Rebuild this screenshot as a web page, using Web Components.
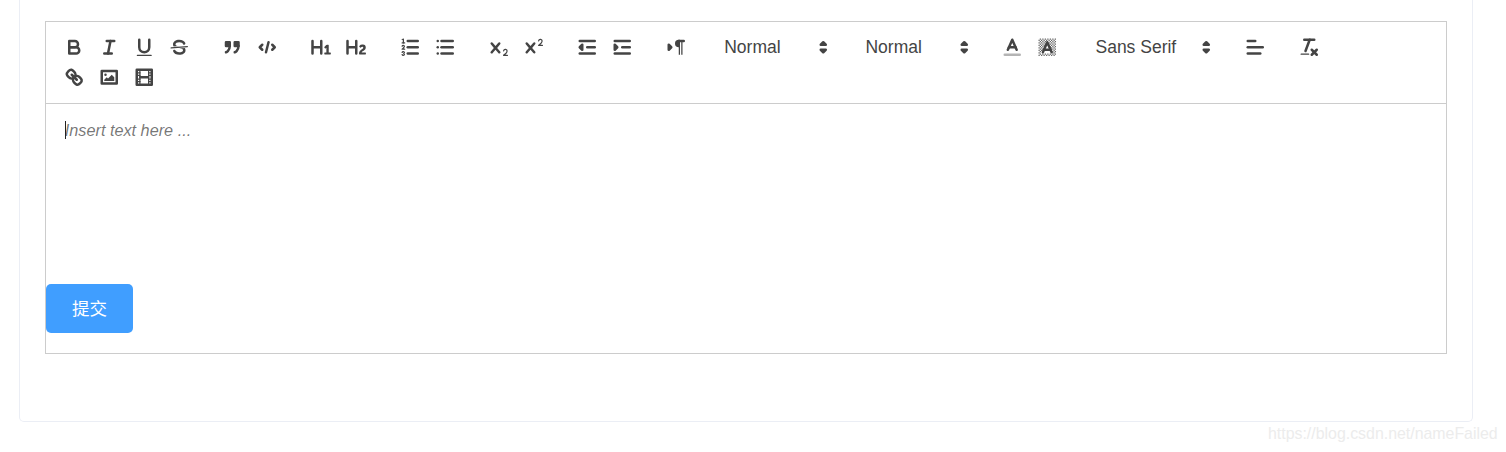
<!DOCTYPE html>
<html>
<head>
<meta charset="utf-8">
<title>editor</title>
<style>
  html, body { margin: 0; padding: 0; background: #fff; }
  body { font-family: "Liberation Sans", Arial, sans-serif; height: 452px; overflow: hidden; }
</style>
</head>
<body>
<editor-page>
  <form-card>
    <rich-editor placeholder="Insert text here ...">
      <editor-toolbar>
        <tool-group>
          <tool-button icon="bold"></tool-button>
          <tool-button icon="italic"></tool-button>
          <tool-button icon="underline"></tool-button>
          <tool-button icon="strike"></tool-button>
        </tool-group>
        <tool-group>
          <tool-button icon="blockquote"></tool-button>
          <tool-button icon="code"></tool-button>
        </tool-group>
        <tool-group>
          <tool-button icon="h1"></tool-button>
          <tool-button icon="h2"></tool-button>
        </tool-group>
        <tool-group>
          <tool-button icon="ordered"></tool-button>
          <tool-button icon="bullet"></tool-button>
        </tool-group>
        <tool-group>
          <tool-button icon="sub"></tool-button>
          <tool-button icon="sup"></tool-button>
        </tool-group>
        <tool-group>
          <tool-button icon="outdent"></tool-button>
          <tool-button icon="indent"></tool-button>
        </tool-group>
        <tool-group>
          <tool-button icon="direction"></tool-button>
        </tool-group>
        <tool-group>
          <tool-picker size="122.5">Normal</tool-picker>
        </tool-group>
        <tool-group>
          <tool-picker size="122.5">Normal</tool-picker>
        </tool-group>
        <tool-group>
          <tool-button icon="color"></tool-button>
          <tool-button icon="background"></tool-button>
        </tool-group>
        <tool-group>
          <tool-picker size="135">Sans Serif</tool-picker>
        </tool-group>
        <tool-group>
          <tool-button icon="align"></tool-button>
        </tool-group>
        <tool-group>
          <tool-button icon="clean"></tool-button>
        </tool-group>
        <tool-group>
          <tool-button icon="link"></tool-button>
          <tool-button icon="image"></tool-button>
          <tool-button icon="video"></tool-button>
        </tool-group>
      </editor-toolbar>
      <submit-button slot="actions">提交</submit-button>
    </rich-editor>
  </form-card>
  <span slot="watermark">https://blog.csdn.net/nameFailed</span>
</editor-page>

<script>
// checkerboard behind the "A" of the background colour icon
function checkerRects(){
    let out = '';
    for(let y = 2; y <= 15; y++){
        for(let x = 2; x <= 15; x++){
            if((x + y) % 2 === 0) continue;
            let halfWidth = (y - 5) * 0.45 + 1;
            if(y >= 4 && y <= 13 && Math.abs(x + 0.5 - 9) < halfWidth) continue;
            out += `<rect class="f" style="opacity:.8" height="1" width="1" x="${x}" y="${y}"/>`;
        }
    }
    return out;
}

const ICONS = {
    bold:`<path class="s" d="M5,4H9.5A2.5,2.5,0,0,1,12,6.5v0A2.5,2.5,0,0,1,9.5,9H5A0,0,0,0,1,5,9V4A0,0,0,0,1,5,4Z"/><path class="s" d="M5,9h5.5A2.5,2.5,0,0,1,13,11.5v0A2.5,2.5,0,0,1,10.5,14H5a0,0,0,0,1,0,0V9A0,0,0,0,1,5,9Z"/>`,
    italic:`<line class="s" x1="7" x2="13" y1="4" y2="4"/><line class="s" x1="5" x2="11" y1="14" y2="14"/><line class="s" x1="8" x2="10" y1="14" y2="4"/>`,
    underline:`<path class="s" d="M5,3V9a4.012,4.012,0,0,0,4,4H9a4.012,4.012,0,0,0,4-4V3"/><rect class="f" height="1" rx="0.5" ry="0.5" width="12" x="3" y="15"/>`,
    strike:`<line class="s thin" x1="15.5" x2="2.5" y1="8.5" y2="9.5"/><path class="f" d="M9.007,8C6.542,7.791,6,7.519,6,6.5,6,5.792,7.283,5,9,5c1.571,0,2.765.679,2.969,1.309a1,1,0,0,0,1.9-.617C13.356,4.106,11.354,3,9,3,6.2,3,4,4.538,4,6.5a3.2,3.2,0,0,0,.5,1.843Z"/><path class="f" d="M8.984,10C11.457,10.208,12,10.479,12,11.5c0,.708-1.283,1.5-3,1.5-1.571,0-2.765-.679-2.969-1.309a1,1,0,1,0-1.9.617C4.644,13.894,6.646,15,9,15c2.8,0,5-1.538,5-3.5a3.2,3.2,0,0,0-.5-1.843Z"/>`,
    blockquote:`<rect class="f s" height="3" width="3" x="4" y="5"/><rect class="f s" height="3" width="3" x="11" y="5"/><path class="f s" d="M7,8c0,4.031-3,5-3,5"/><path class="f s" d="M14,8c0,4.031-3,5-3,5"/>`,
    code:`<polyline class="s" points="5 7 3 9 5 11"/><polyline class="s" points="13 7 15 9 13 11"/><line class="s" x1="10" x2="8" y1="5" y2="13"/>`,
    h1:`<path class="f" d="M10,4V14a1,1,0,0,1-2,0V10H3v4a1,1,0,0,1-2,0V4A1,1,0,0,1,3,4V8H8V4a1,1,0,0,1,2,0Zm6.06787,9.209H14.98975V7.59863a.54085.54085,0,0,0-.605-.60547h-.62744a1.01119,1.01119,0,0,0-.748.29688L11.645,8.56641a.5435.5435,0,0,0-.022.8584l.28613.30762a.53861.53861,0,0,0,.84717.0332l.09912-.08789a1.2137,1.2137,0,0,0,.2417-.35254h.02246s-.01123.30859-.01123.60547V13.209H12.041a.54085.54085,0,0,0-.605.60547v.43945a.54085.54085,0,0,0,.605.60547h4.02686a.54085.54085,0,0,0,.605-.60547v-.43945A.54085.54085,0,0,0,16.06787,13.209Z"/>`,
    h2:`<path class="f" d="M16.73975,13.81445v.43945a.54085.54085,0,0,1-.605.60547H11.855a.58392.58392,0,0,1-.64893-.60547V14.0127c0-2.90527,3.39941-3.42187,3.39941-4.55469a.77675.77675,0,0,0-.84717-.78125,1.17684,1.17684,0,0,0-.83594.38477c-.2749.26367-.561.374-.85791.13184l-.4292-.34082c-.30811-.24219-.38525-.51758-.1543-.81445a2.97155,2.97155,0,0,1,2.45361-1.17676,2.45393,2.45393,0,0,1,2.68408,2.40918c0,2.45312-3.1792,2.92676-3.27832,3.93848h2.79443A.54085.54085,0,0,1,16.73975,13.81445ZM9,3A.99974.99974,0,0,0,8,4V8H3V4A1,1,0,0,0,1,4V14a1,1,0,0,0,2,0V10H8v4a1,1,0,0,0,2,0V4A.99974.99974,0,0,0,9,3Z"/>`,
    ordered:`<line class="s" x1="7" x2="15" y1="4" y2="4"/><line class="s" x1="7" x2="15" y1="9" y2="9"/><line class="s" x1="7" x2="15" y1="14" y2="14"/><line class="s thin" x1="2.5" x2="4.5" y1="5.5" y2="5.5"/><path class="f" d="M3.5,6A0.5,0.5,0,0,1,3,5.5V3.085l-0.276.138A0.5,0.5,0,0,1,2.053,3c-0.124-.247-0.023-0.324.224-0.447l1-.5A0.5,0.5,0,0,1,4,2.5v3A0.5,0.5,0,0,1,3.5,6Z"/><path class="s thin" d="M4.5,10.5h-2c0-.234,1.85-1.076,1.85-2.234A0.959,0.959,0,0,0,2.5,8.156"/><path class="s thin" d="M2.5,14.846a0.959,0.959,0,0,0,1.85-.109A0.7,0.7,0,0,0,3.75,14a0.688,0.688,0,0,0,.6-0.736,0.959,0.959,0,0,0-1.85-.109"/>`,
    bullet:`<line class="s" x1="6" x2="15" y1="4" y2="4"/><line class="s" x1="6" x2="15" y1="9" y2="9"/><line class="s" x1="6" x2="15" y1="14" y2="14"/><line class="s" x1="3" x2="3" y1="4" y2="4"/><line class="s" x1="3" x2="3" y1="9" y2="9"/><line class="s" x1="3" x2="3" y1="14" y2="14"/>`,
    sub:`<path class="f" d="M15.5,15H13.861a3.858,3.858,0,0,0,1.914-2.975,1.8,1.8,0,0,0-1.6-1.751A1.921,1.921,0,0,0,12.021,11.7a0.50013,0.50013,0,1,0,.957.291h0a0.914,0.914,0,0,1,1.053-.725,0.81,0.81,0,0,1,.744.762c0,1.076-1.16971,1.86982-1.93971,2.43082A1.45639,1.45639,0,0,0,12,15.5a0.5,0.5,0,0,0,.5.5h3A0.5,0.5,0,0,0,15.5,15Z"/><path class="f" d="M9.65,5.241a1,1,0,0,0-1.409.108L6,7.964,3.759,5.349A1,1,0,0,0,2.192,6.59178Q2.21541,6.6213,2.241,6.649L4.684,9.5,2.241,12.35A1,1,0,0,0,3.71,13.70722q0.02557-.02768.049-0.05722L6,11.036,8.241,13.65a1,1,0,1,0,1.567-1.24277Q9.78459,12.3777,9.759,12.35L7.316,9.5,9.759,6.651A1,1,0,0,0,9.65,5.241Z"/>`,
    sup:`<path class="f" d="M15.5,7H13.861a4.015,4.015,0,0,0,1.914-2.975,1.8,1.8,0,0,0-1.6-1.751A1.922,1.922,0,0,0,12.021,3.7a0.5,0.5,0,1,0,.957.291,0.917,0.917,0,0,1,1.053-.725,0.81,0.81,0,0,1,.744.762c0,1.077-1.164,1.925-1.934,2.486A1.423,1.423,0,0,0,12,7.5a0.5,0.5,0,0,0,.5.5h3A0.5,0.5,0,0,0,15.5,7Z"/><path class="f" d="M9.651,5.241a1,1,0,0,0-1.41.108L6,7.964,3.759,5.349a1,1,0,1,0-1.519,1.3L4.683,9.5,2.241,12.35a1,1,0,1,0,1.519,1.3L6,11.036l2.241,2.615a1,1,0,0,0,1.519-1.3L7.317,9.5,9.759,6.651A1,1,0,0,0,9.651,5.241Z"/>`,
    outdent:`<line class="s" x1="3" x2="15" y1="14" y2="14"/><line class="s" x1="3" x2="15" y1="4" y2="4"/><line class="s" x1="9" x2="15" y1="9" y2="9"/><polyline class="s f" points="5 7 5 11 3 9 5 7"/>`,
    indent:`<line class="s" x1="3" x2="15" y1="14" y2="14"/><line class="s" x1="3" x2="15" y1="4" y2="4"/><line class="s" x1="9" x2="15" y1="9" y2="9"/><polyline class="s f" points="3 7 3 11 5 9 3 7"/>`,
    direction:`<polygon class="s f" points="3 11 5 9 3 7 3 11"/><line class="s f" x1="15" x2="11" y1="4" y2="4"/><path class="f" d="M11,3a3,3,0,0,0,0,6h1V3H11Z"/><rect class="f" height="11" width="1" x="11" y="4"/><rect class="f" height="11" width="1" x="13" y="4"/>`,
    color:`<line class="s" style="opacity:.4" x1="3" x2="15" y1="15" y2="15"/><polyline class="s" points="5.5 11 9 3 12.5 11"/><line class="s" x1="11.63" x2="6.38" y1="9" y2="9"/>`,
    background:checkerRects() + `<polyline class="s" points="5.5 13 9 5 12.5 13"/><line class="s" x1="11.63" x2="6.38" y1="11" y2="11"/>`,
    align:`<line class="s" x1="3" x2="15" y1="9" y2="9"/><line class="s" x1="3" x2="13" y1="14" y2="14"/><line class="s" x1="3" x2="9" y1="4" y2="4"/>`,
    clean:`<line class="s" x1="5" x2="13" y1="3" y2="3"/><line class="s" x1="6" x2="9.35" y1="12" y2="3"/><line class="s" x1="11" x2="15" y1="11" y2="15"/><line class="s" x1="15" x2="11" y1="11" y2="15"/><rect class="f" height="1" rx="0.5" ry="0.5" width="7" x="2" y="14"/>`,
    link:`<line class="s" x1="7" x2="11" y1="7" y2="11"/><path class="s" d="M8.9,4.577a3.476,3.476,0,0,1,.36,4.679A3.476,3.476,0,0,1,4.577,8.9C3.185,7.5,2.035,6.4,4.217,4.217S7.5,3.185,8.9,4.577Z"/><path class="s" d="M13.423,9.1a3.476,3.476,0,0,0-4.679-.36,3.476,3.476,0,0,0,.36,4.679c1.392,1.392,2.5,2.542,4.679.36S14.815,10.5,13.423,9.1Z"/>`,
    image:`<rect class="s" height="10" width="12" x="3" y="4"/><circle class="f" cx="6" cy="7" r="1"/><polyline class="f" points="5 12 5 11 7 9 8 10 11 7 13 9 13 12 5 12"/>`,
    video:`<rect class="s" height="12" width="12" x="3" y="3"/><rect class="f" height="12" width="1" x="5" y="3"/><rect class="f" height="12" width="1" x="12" y="3"/><rect class="f" height="2" width="8" x="5" y="8"/><rect class="f" height="1" width="3" x="3" y="5"/><rect class="f" height="1" width="3" x="3" y="7"/><rect class="f" height="1" width="3" x="3" y="10"/><rect class="f" height="1" width="3" x="3" y="12"/><rect class="f" height="1" width="3" x="12" y="5"/><rect class="f" height="1" width="3" x="12" y="7"/><rect class="f" height="1" width="3" x="12" y="10"/><rect class="f" height="1" width="3" x="12" y="12"/>`
};

const ICON_STYLE = `
  svg { width:22.5px; height:22.5px; display:block; overflow:visible; }
  .s { fill:none; stroke:#444; stroke-width:2; stroke-linecap:round; stroke-linejoin:round; }
  .f { fill:#444; }
  .s.f { stroke:#444; }
  .thin { stroke-width:1; }
`;

class EditorPage extends HTMLElement{
    constructor(){
        super();
        this.attachShadow({mode:'open'});
        this.shadowRoot.innerHTML = `
        <style>
          :host { display:block; position:relative; height:452px; padding-left:19px; box-sizing:border-box; }
          .mark { position:absolute; left:1268px; top:425px; font:15.9px "Liberation Sans", Arial, sans-serif; color:#ececec; white-space:nowrap; }
        </style>
        <slot></slot>
        <div class="mark"><slot name="watermark"></slot></div>`;
    }
}

class FormCard extends HTMLElement{
    constructor(){
        super();
        this.attachShadow({mode:'open'});
        this.shadowRoot.innerHTML = `
        <style>
          :host { display:block; width:1454px; height:422px; box-sizing:border-box; padding:21px 25px 0 25px; border:1px solid #ebeef5; border-top:0; border-radius:0 0 5px 5px; }
        </style>
        <slot></slot>`;
    }
}

class RichEditor extends HTMLElement{
    constructor(){
        super();
        this.attachShadow({mode:'open'});
        this.shadowRoot.innerHTML = `
        <style>
          :host { display:block; position:relative; width:1402px; height:333px; box-sizing:border-box; border:1px solid #ccc; font-family:"Liberation Sans", Arial, sans-serif; }
          .body { height:181px; box-sizing:border-box; padding:15px 18.75px; border-top:1px solid #ccc; font-size:16.25px; line-height:23px; font-style:italic; color:rgba(0,0,0,.55); }
          .caret { position:absolute; left:19px; top:99px; width:1px; height:18px; background:#222; }
        </style>
        <slot></slot>
        <div class="body"></div>
        <div class="caret"></div>
        <slot name="actions"></slot>`;
        this.shadowRoot.querySelector('.body').textContent = this.getAttribute('placeholder');
    }
}

class EditorToolbar extends HTMLElement{
    constructor(){
        super();
        this.attachShadow({mode:'open'});
        this.shadowRoot.innerHTML = `
        <style>
          :host { display:flex; flex-wrap:wrap; column-gap:18.75px; padding:10px 10px 10px 10.4px; height:81px; box-sizing:border-box; align-content:flex-start; }
        </style>
        <slot></slot>`;
    }
}

class ToolGroup extends HTMLElement{
    constructor(){
        super();
        this.attachShadow({mode:'open'});
        this.shadowRoot.innerHTML = `
        <style>
          :host { display:flex; height:30px; }
        </style>
        <slot></slot>`;
    }
}

class ToolButton extends HTMLElement{
    constructor(){
        super();
        this.attachShadow({mode:'open'});
        this.shadowRoot.innerHTML = `
        <style>
          :host { display:flex; width:35px; height:30px; align-items:center; justify-content:center; }
          ${ICON_STYLE}
        </style>
        <svg viewBox="0 0 18 18">${ICONS[this.getAttribute('icon')]}</svg>`;
    }
}

class ToolPicker extends HTMLElement{
    constructor(){
        super();
        this.attachShadow({mode:'open'});
        this.shadowRoot.innerHTML = `
        <style>
          :host { display:flex; width:${this.getAttribute('size')}px; height:30px; align-items:center; justify-content:space-between; padding:0 1px 0 11.6px; box-sizing:border-box; font:500 17.5px "Liberation Sans", Arial, sans-serif; color:#444; }
          ${ICON_STYLE}
        </style>
        <span><slot></slot></span>
        <svg viewBox="0 0 18 18"><polygon class="s" points="7 11 9 13 11 11 7 11"/><polygon class="s" points="7 7 9 5 11 7 7 7"/></svg>`;
    }
}

class SubmitButton extends HTMLElement{
    constructor(){
        super();
        this.attachShadow({mode:'open'});
        this.shadowRoot.innerHTML = `
        <style>
          :host { display:flex; width:87px; height:49px; padding-bottom:2px; box-sizing:border-box; align-items:center; justify-content:center; background:#409eff; color:#fff; border-radius:5px; font:17.5px "Liberation Sans", "Noto Sans CJK SC", sans-serif; }
        </style>
        <slot></slot>`;
    }
}

window.customElements.define('editor-page',EditorPage);
window.customElements.define('form-card',FormCard);
window.customElements.define('rich-editor',RichEditor);
window.customElements.define('editor-toolbar',EditorToolbar);
window.customElements.define('tool-group',ToolGroup);
window.customElements.define('tool-button',ToolButton);
window.customElements.define('tool-picker',ToolPicker);
window.customElements.define('submit-button',SubmitButton);
</script>
</body>
</html>
